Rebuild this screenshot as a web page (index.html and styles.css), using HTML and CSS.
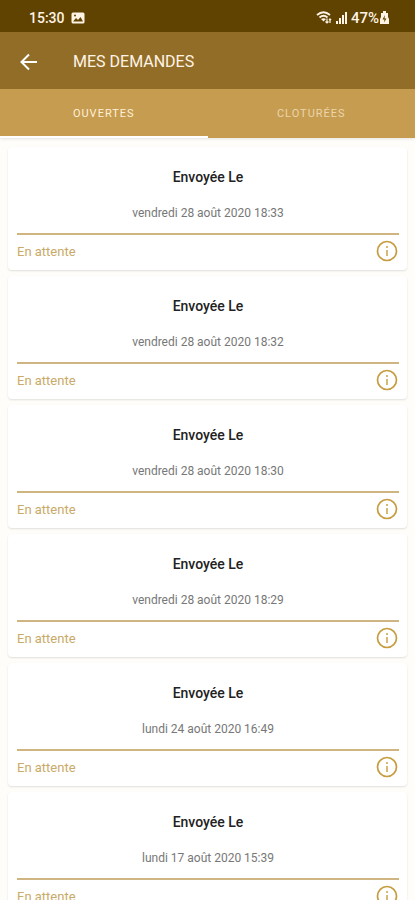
FILE: index.html
```html
<!DOCTYPE html>
<html lang="fr">
<head>
    <meta charset="UTF-8">
    <meta name="viewport" content="width=device-width, initial-scale=1.0">
    <title>Mes demandes</title>
    <link rel="stylesheet" href="styles.css">
</head>
<body>
    <svg class="sprite" aria-hidden="true">
        <symbol id="info" viewBox="0 0 22 22">
            <circle cx="11" cy="11" r="9.5" fill="none" stroke="currentColor" stroke-width="1.7"/>
            <g opacity="0.7">
                <rect x="10" y="6" width="2" height="2" fill="currentColor"/>
                <rect x="10" y="10" width="2" height="6" fill="currentColor"/>
            </g>
        </symbol>
    </svg>

    <header class="header">
        <div class="status-bar">
            <div class="status-left">
                <span>15:30</span>
                <svg width="14" height="12" viewBox="0 0 14 12">
                    <rect x="0.5" y="0.5" width="13" height="11" rx="1.5" fill="#fff4e6"/>
                    <path d="M2 9.5 L5 6 L7 8 L9.500 5 L12 9.500 Z" fill="#604300"/>
                    <circle cx="4" cy="3.500" r="1" fill="#604300"/>
                </svg>
            </div>
            <div class="status-right">
                <svg width="16" height="13" viewBox="0 0 16 13" fill="none" stroke="#fff4e6">
                    <path d="M1 4 Q7.500 -1.500 14 4" stroke-width="1.8"/>
                    <path d="M3.500 6.500 Q7.500 3 11.500 6.500" stroke-width="1.8"/>
                    <path d="M5 8 Q7.500 6.500 10 8 L7.500 10.500 Z" fill="#fff4e6" stroke="none"/>
                    <path d="M11 7.500 V12 M9.500 10.500 L11 12 L12.500 10.500 M14 12 V8 M13 9.200 L14 8 L15 9.200" stroke-width="1.2"/>
                </svg>
                <svg width="11" height="12" viewBox="0 0 11 12" fill="#fff4e6">
                    <rect x="0" y="9" width="2" height="3"/>
                    <rect x="3" y="6" width="2" height="6"/>
                    <rect x="6" y="3" width="2" height="9"/>
                    <rect x="9" y="0" width="2" height="12"/>
                </svg>
                <span class="battery">47%
                    <svg width="9" height="13" viewBox="0 0 9 13">
                        <path d="M3 0 H6 V2 H8 V6 L9 8 V13 H0 V8 L1 6 V2 H3 Z" fill="#fff4e6"/>
                        <path d="M5 4 L2.500 8.500 H4.500 L4 11.500 L6.500 7.500 H4.500 Z" fill="#604300"/>
                    </svg>
                </span>
            </div>
        </div>
        <div class="app-bar">
            <button class="back" aria-label="Retour">
                <svg width="18" height="18" viewBox="0 0 18 18" fill="none" stroke="currentColor" stroke-width="2">
                    <path d="M17 9 H2 M9 1.500 L1.500 9 L9 16.500"/>
                </svg>
            </button>
            <h1>MES DEMANDES</h1>
        </div>
        <div class="tabs" role="tablist">
            <button class="tab active" role="tab" aria-selected="true">OUVERTES</button>
            <button class="tab" role="tab" aria-selected="false">CLOTURÉES</button>
        </div>
    </header>

    <main class="list">
        <article class="card">
            <h2>Envoyée Le</h2>
            <p class="date">vendredi 28 août 2020 18:33</p>
            <div class="card-footer">
                <span>En attente</span>
                <button class="info" aria-label="Détails"><svg width="22" height="22"><use href="#info"/></svg></button>
            </div>
        </article>
        <article class="card">
            <h2>Envoyée Le</h2>
            <p class="date">vendredi 28 août 2020 18:32</p>
            <div class="card-footer">
                <span>En attente</span>
                <button class="info" aria-label="Détails"><svg width="22" height="22"><use href="#info"/></svg></button>
            </div>
        </article>
        <article class="card">
            <h2>Envoyée Le</h2>
            <p class="date">vendredi 28 août 2020 18:30</p>
            <div class="card-footer">
                <span>En attente</span>
                <button class="info" aria-label="Détails"><svg width="22" height="22"><use href="#info"/></svg></button>
            </div>
        </article>
        <article class="card">
            <h2>Envoyée Le</h2>
            <p class="date">vendredi 28 août 2020 18:29</p>
            <div class="card-footer">
                <span>En attente</span>
                <button class="info" aria-label="Détails"><svg width="22" height="22"><use href="#info"/></svg></button>
            </div>
        </article>
        <article class="card">
            <h2>Envoyée Le</h2>
            <p class="date">lundi 24 août 2020 16:49</p>
            <div class="card-footer">
                <span>En attente</span>
                <button class="info" aria-label="Détails"><svg width="22" height="22"><use href="#info"/></svg></button>
            </div>
        </article>
        <article class="card">
            <h2>Envoyée Le</h2>
            <p class="date">lundi 17 août 2020 15:39</p>
            <div class="card-footer">
                <span>En attente</span>
                <button class="info" aria-label="Détails"><svg width="22" height="22"><use href="#info"/></svg></button>
            </div>
        </article>
    </main>
</body>
</html>
```

FILE: styles.css
```css
* {
    box-sizing: border-box;
}
body {
    display: flex;
    flex-direction: column;
    height: 100vh;
    margin: 0;
    background-color: #fefdfa;
    font-family: Roboto, "Noto Sans", sans-serif;
}
h1, h2, p {
    margin: 0;
}
button {
    padding: 0;
    border: none;
    background: none;
    font-family: inherit;
    cursor: pointer;
}
svg {
    display: block;
}
.sprite {
    position: absolute;
    width: 0;
    height: 0;
}
.header {
    flex-shrink: 0;
    color: #fff4e6;
    box-shadow: 0 1px 3px rgba(0,0,0,0.1);
}
.status-bar {
    display: flex;
    justify-content: space-between;
    align-items: center;
    height: 32px;
    padding: 3px 26px 0 29px;
    background-color: #604300;
    font-size: 14px;
    font-weight: 500;
}
.status-left, .status-right {
    display: flex;
    align-items: center;
    gap: 6px;
}
.status-right {
    gap: 4px;
    font-size: 15px;
}
.battery {
    display: flex;
    align-items: center;
    gap: 1px;
}
.app-bar {
    display: flex;
    align-items: center;
    gap: 35px;
    height: 57px;
    padding: 2px 20px 0;
    background-color: #926d27;
}
.back {
    color: #fff;
}
h1 {
    font-size: 16px;
    font-weight: 400;
}
.tabs {
    display: flex;
    background-color: #c69c50;
}
.tab {
    flex: 1;
    height: 49px;
    border-top: 2px solid transparent;
    border-bottom: 2px solid transparent;
    font-size: 11px;
    letter-spacing: 1px;
    color: #ecd5ab;
}
.tab.active {
    border-bottom-color: #fff;
    color: #fff0d8;
}
.list {
    flex: 1;
    display: flex;
    flex-direction: column;
    gap: 6px;
    padding: 9px 8px;
    overflow: hidden;
}
.card {
    flex-shrink: 0;
    padding: 20px 8px 0 9px;
    border-radius: 4px;
    background-color: #fff;
    box-shadow: 0 1px 2px rgba(0,0,0,0.12);
    text-align: center;
}
h2 {
    font-size: 14px;
    line-height: 20px;
    font-weight: 500;
    color: #222;
}
.date {
    margin-top: 16px;
    font-size: 12px;
    line-height: 20px;
    color: #777;
}
.card-footer {
    display: flex;
    justify-content: space-between;
    align-items: center;
    height: 37px;
    margin-top: 10px;
    padding-bottom: 3px;
    border-top: 2px solid #cfb581;
    font-size: 13px;
    color: #c9aa68;
}
.info {
    margin-right: 1px;
    color: #c69c3e;
}
```
